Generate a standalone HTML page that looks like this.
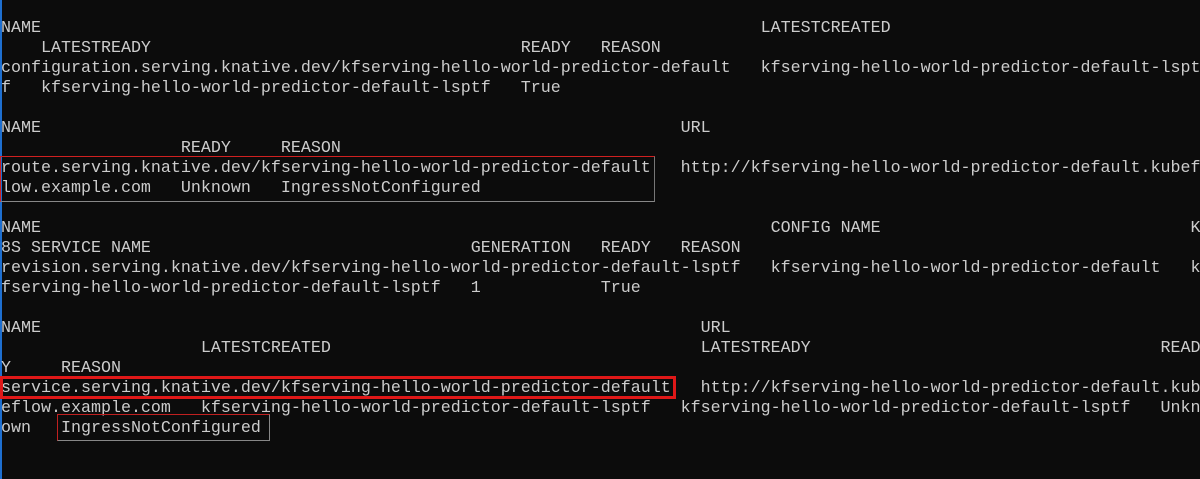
<!DOCTYPE html>
<html><head><meta charset="utf-8"><style>
html,body{margin:0;padding:0;background:#0c0c0c;width:1200px;height:479px;overflow:hidden;position:relative}
pre{position:absolute;left:1px;top:19px;margin:0;font-family:"Liberation Mono",monospace;font-size:16.67px;line-height:20px;color:#cccccc;white-space:pre}
.bar{position:absolute;left:0;top:0;width:2px;height:479px;background:#1e6fd0}
.b{position:absolute;box-sizing:border-box}
</style></head><body>
<div class="bar"></div>
<pre>NAME                                                                        LATESTCREATED
    LATESTREADY                                     READY   REASON
configuration.serving.knative.dev/kfserving-hello-world-predictor-default   kfserving-hello-world-predictor-default-lspt
f   kfserving-hello-world-predictor-default-lsptf   True

NAME                                                                URL
                  READY     REASON
route.serving.knative.dev/kfserving-hello-world-predictor-default   http://kfserving-hello-world-predictor-default.kubef
low.example.com   Unknown   IngressNotConfigured

NAME                                                                         CONFIG NAME                               K
8S SERVICE NAME                                GENERATION   READY   REASON
revision.serving.knative.dev/kfserving-hello-world-predictor-default-lsptf   kfserving-hello-world-predictor-default   k
fserving-hello-world-predictor-default-lsptf   1            True

NAME                                                                  URL
                    LATESTCREATED                                     LATESTREADY                                   READ
Y     REASON
service.serving.knative.dev/kfserving-hello-world-predictor-default   http://kfserving-hello-world-predictor-default.kub
eflow.example.com   kfserving-hello-world-predictor-default-lsptf   kfserving-hello-world-predictor-default-lsptf   Unkn
own   IngressNotConfigured</pre>
<div class="b" style="left:0;top:156px;width:655px;height:46px;border:1px solid #d02020;border-right-color:#777;border-bottom-color:#888"></div>
<div class="b" style="left:0;top:376px;width:676px;height:23px;border:3px solid #e01818"></div>
<div class="b" style="left:57px;top:414px;width:213px;height:27px;border:1px solid #c02020;border-right-color:#888;border-bottom-color:#888"></div>
</body></html>
